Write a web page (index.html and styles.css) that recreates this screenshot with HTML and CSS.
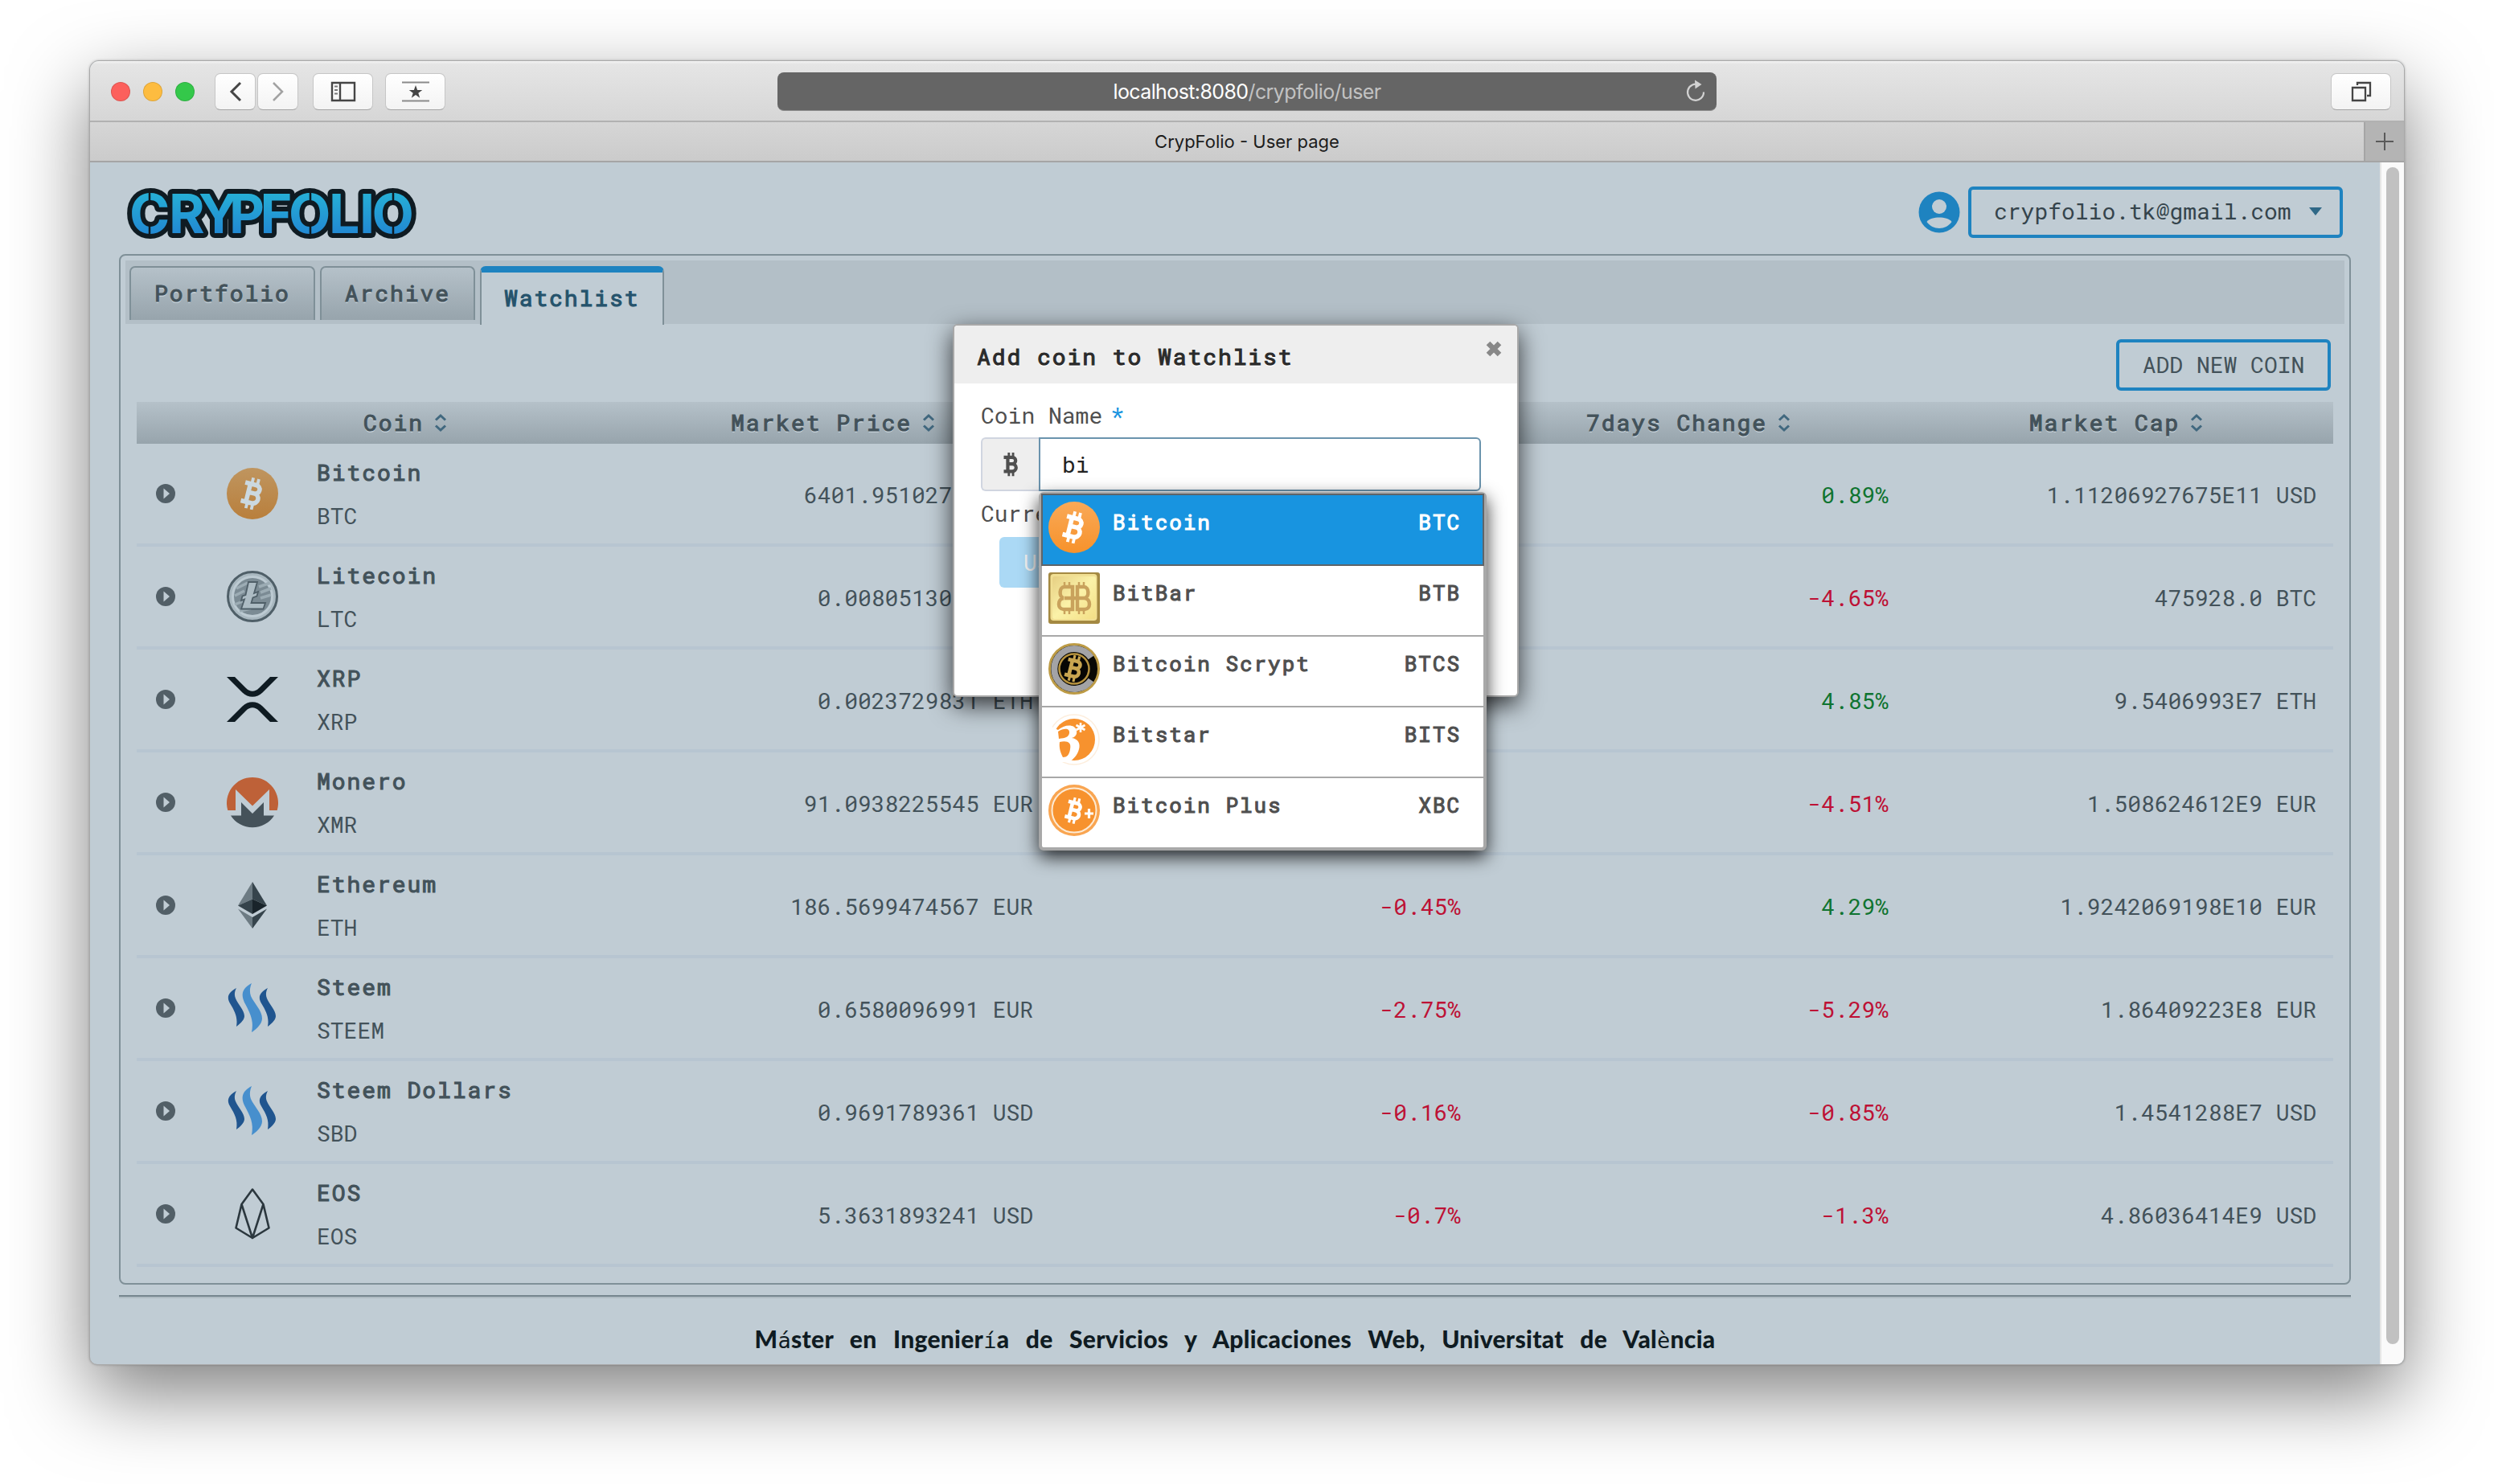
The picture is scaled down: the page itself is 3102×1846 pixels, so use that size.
FILE: index.html
```html
<!DOCTYPE html>
<html lang="en">
<head>
<meta charset="utf-8">
<title>CrypFolio - User page</title>
<link rel="stylesheet" href="styles.css">
</head>
<body>
<svg class="defs" width="0" height="0" aria-hidden="true">
  <defs>
    <linearGradient id="orange" x1="0" y1="0" x2="0" y2="1"><stop offset="0" stop-color="#f9a957"/><stop offset="1" stop-color="#f7922b"/></linearGradient>
    <linearGradient id="orange-dim" x1="0" y1="0" x2="0" y2="1"><stop offset="0" stop-color="#bf955f"/><stop offset="1" stop-color="#b97f3c"/></linearGradient>
    <linearGradient id="logo-fill" x1="0" y1="0" x2="0" y2="1"><stop offset="0.15" stop-color="#26b2d6"/><stop offset="0.9" stop-color="#2183d2"/></linearGradient>
    <linearGradient id="gold" x1="0" y1="0" x2="1" y2="1"><stop offset="0" stop-color="#e6cf83"/><stop offset="0.5" stop-color="#fbf2a8"/><stop offset="1" stop-color="#f3de85"/></linearGradient>
  </defs>
  <symbol id="b-mark" viewBox="0 0 64 64">
    <g fill="none" stroke="currentColor">
      <path stroke-width="5.6" d="M20 20.6H34a5.6 5.4 0 0 1 0 10.8H27M34 31.4a6.4 6.2 0 0 1 0 12.4H20M26.6 20.6V44"/>
      <path stroke-width="3.8" d="M28.4 12.6v8M35.4 12.6v8M28.4 44v7.6M35.4 44v7.6"/>
    </g>
  </symbol>
  <symbol id="sort" viewBox="0 0 16 24"><path fill="none" stroke="#41687f" stroke-width="3" d="M2 8.500 8 3l6 5.500M2 15.500 8 21l6-5.500"/></symbol>
  <symbol id="toggle" viewBox="0 0 24 24"><circle cx="12" cy="12" r="12" fill="#525f67"/><path fill="#c0ccd4" d="M9.500 5.500 17 12l-7.500 6.500z"/></symbol>
  <symbol id="steem" viewBox="0 0 64 64">
    <path fill="#20558f" d="M12 7C1 13 0 19 4 26c6 10 10 17 8 29 4-3 10-8 10-13 0-7-8-15-11-22-2-5-1-9 1-13z"/>
    <path fill="#20558f" d="M51 7C40 13 39 19 43 26c6 10 10 17 8 29 4-3 10-8 10-13 0-7-8-15-11-22-2-5-1-9 1-13z"/>
    <path fill="#478fcd" d="M31 1C18 8 18 16 22 25c7 13 12 22 9 37 5-3 13-10 13-17C44 35 34 26 30 17c-2-6-1-11 1-16z"/>
  </symbol>
</svg>

<div class="window">
  <header class="toolbar">
    <div class="lights"><i class="red"></i><i class="yellow"></i><i class="green"></i></div>
    <div class="pair">
      <span class="tb small"><svg width="16" height="26" viewBox="0 0 16 26"><path d="M14 2 3 13l11 11" fill="none" stroke="#454545" stroke-width="3"/></svg></span>
      <span class="tb small"><svg width="16" height="26" viewBox="0 0 16 26"><path d="M2 2l11 11L2 24" fill="none" stroke="#a2a2a2" stroke-width="2.500"/></svg></span>
    </div>
    <span class="tb side"><svg width="32" height="26" viewBox="0 0 32 26"><path d="M2 2h28v22H2zM12 2v22" fill="none" stroke="#454545" stroke-width="2.400"/><path d="M5 6.500h4M5 11h4M5 15.500h4" stroke="#777" stroke-width="2"/></svg></span>
    <span class="tb star"><svg width="36" height="26" viewBox="0 0 36 26"><path d="M1 1.500h34M1 24.500h34" stroke="#8a8a8a" stroke-width="2"/><path fill="#454545" d="m18 5 2.100 5.900h6.200l-5 3.800 1.900 6.100-5.200-3.700-5.200 3.700 1.900-6.100-5-3.800h6.200z"/></svg></span>
    <div class="address"><b>localhost:8080</b><span>/crypfolio/user</span>
      <svg class="reload" width="26" height="30" viewBox="0 0 26 30"><path d="M17 7.600A10 10 0 1 0 23 16.500" fill="none" stroke="#d2d2d2" stroke-width="2.200"/><path d="M12 1.500 20.500 7 12.500 12.500z" fill="#d2d2d2"/></svg>
    </div>
    <span class="tb tabs-btn"><svg width="26" height="26" viewBox="0 0 26 26"><path d="M8 5V2h16v16h-4M2 8h16v16H2z" fill="none" stroke="#454545" stroke-width="2.300"/></svg></span>
  </header>
  <div class="tabbar"><span class="tab-title">CrypFolio - User page</span><span class="plus"><svg width="24" height="24" viewBox="0 0 24 24"><path d="M12 1v22M1 12h22" stroke="#5a5a5a" stroke-width="2"/></svg></span></div>

  <div class="view">
    <div class="page">
      <div class="top">
        <svg class="logo" width="370" height="72" viewBox="0 0 370 72">
          <text class="logo-text logo-outline" x="7 56 93 131 169.500 205 255 293 308.500" y="58">CRYPFOLIO</text>
          <text class="logo-text" fill="url(#logo-fill)" x="7 56 93 131 169.500 205 255 293 308.500" y="58">CRYPFOLIO</text>
          <path d="M32 5v14M32 47v14M232 5v14M232 47v14M335 5v14M335 47v14" stroke="#0f1b22" stroke-width="2.500"/>
        </svg>
        <div class="account">
          <svg width="52" height="52" viewBox="0 0 52 52"><circle cx="26" cy="26" r="25.500" fill="#1e83c0"/><circle cx="26" cy="19" r="9" fill="#c0ccd4"/><path fill="#c0ccd4" d="M10.500 38C13 34 20 32.500 26 32.500S39 34 41.500 38C38 43 32 46 26 46s-12-3-15.500-8z"/></svg>
          <span class="email">crypfolio.tk@gmail.com<i class="caret"></i></span>
        </div>
      </div>

      <section class="panel">
        <nav class="tabs"><span class="tab">Portfolio</span><span class="tab">Archive</span><span class="tab active">Watchlist</span></nav>
        <div class="actions"><span class="add">ADD NEW COIN</span></div>
        <div class="table">
          <div class="row head">
            <span></span>
            <span>Coin<svg width="16" height="24"><use href="#sort"/></svg></span>
            <span>Market Price<svg width="16" height="24"><use href="#sort"/></svg></span>
            <span></span>
            <span>7days Change<svg width="16" height="24"><use href="#sort"/></svg></span>
            <span>Market Cap<svg width="16" height="24"><use href="#sort"/></svg></span>
          </div>
          <div class="row">
            <svg class="toggle" width="24" height="24"><use href="#toggle"/></svg>
            <div class="coin"><svg width="64" height="64" viewBox="0 0 64 64"><circle cx="32" cy="32" r="32" fill="url(#orange-dim)"/><g color="#cbd8df" transform="rotate(14 32 32)"><use href="#b-mark" width="64" height="64"/></g></svg><div><b>Bitcoin</b><span>BTC</span></div></div>
            <span>6401.95102700 USD</span><span></span><span class="up">0.89%</span><span>1.11206927675E11 USD</span>
          </div>
          <div class="row">
            <svg class="toggle" width="24" height="24"><use href="#toggle"/></svg>
            <div class="coin"><svg width="64" height="64" viewBox="0 0 64 64"><circle cx="32" cy="32" r="30.500" fill="#a9b8c0" stroke="#4f5f68" stroke-width="3"/><circle cx="32" cy="32" r="24.500" fill="#7b8b94" stroke="#bccad2" stroke-width="3"/><path d="M40 20l14-5M42 27l13-5M42 34l13-4M12 22l14-7M10 31l12-6M10 42l10-4M16 50l14-3" stroke="#9cacb4" stroke-width="3.500"/><path d="M27 14h11l-4 14 5-2-1.500 5.500-5 2L30.500 40H48l-2.500 7.500H18l4-12-4 1.500 1.500-5.500 4-1.500z" fill="#adbcc4" stroke="#4f5f68" stroke-width="1.800"/></svg><div><b>Litecoin</b><span>LTC</span></div></div>
            <span>0.0080513000 BTC</span><span></span><span class="down">-4.65%</span><span>475928.0 BTC</span>
          </div>
          <div class="row">
            <svg class="toggle" width="24" height="24"><use href="#toggle"/></svg>
            <div class="coin"><svg width="64" height="64" viewBox="0 0 64 64"><path fill="#0f1b22" d="M0 4h10L24 18c5 5 11 5 16 0L54 4h10L44.500 23.500c-7 7-18 7-25 0zM0 60h10L24 46c5-5 11-5 16 0l14 14h10L44.500 40.500c-7-7-18-7-25 0z"/></svg><div><b>XRP</b><span>XRP</span></div></div>
            <span>0.0023729831 ETH</span><span></span><span class="up">4.85%</span><span>9.5406993E7 ETH</span>
          </div>
          <div class="row">
            <svg class="toggle" width="24" height="24"><use href="#toggle"/></svg>
            <div class="coin"><svg width="64" height="64" viewBox="0 0 64 64"><path fill="#be6138" d="M1.300 42A32 32 0 1 1 62.700 42H53V16L32 36.500 11 16v26z"/><path fill="#45525a" d="M5 48.500h13V32l14 14 14-14v16.500h13A32 32 0 0 1 5 48.500z"/></svg><div><b>Monero</b><span>XMR</span></div></div>
            <span>91.0938225545 EUR</span><span></span><span class="down">-4.51%</span><span>1.508624612E9 EUR</span>
          </div>
          <div class="row">
            <svg class="toggle" width="24" height="24"><use href="#toggle"/></svg>
            <div class="coin"><svg width="64" height="64" viewBox="0 0 64 64"><path fill="#6d7b83" d="M32 3 14 32.500l18-8z"/><path fill="#36444c" d="M32 3v21.500l18 8z"/><path fill="#35434b" d="M14 32.500l18-8V43z"/><path fill="#19242b" d="M50 32.500l-18-8V43z"/><path fill="#6d7b83" d="M14 36.500 32 47v14z"/><path fill="#36444c" d="M50 36.500 32 47v14z"/></svg><div><b>Ethereum</b><span>ETH</span></div></div>
            <span>186.5699474567 EUR</span><span class="down">-0.45%</span><span class="up">4.29%</span><span>1.9242069198E10 EUR</span>
          </div>
          <div class="row">
            <svg class="toggle" width="24" height="24"><use href="#toggle"/></svg>
            <div class="coin"><svg width="64" height="64"><use href="#steem"/></svg><div><b>Steem</b><span>STEEM</span></div></div>
            <span>0.6580096991 EUR</span><span class="down">-2.75%</span><span class="down">-5.29%</span><span>1.86409223E8 EUR</span>
          </div>
          <div class="row">
            <svg class="toggle" width="24" height="24"><use href="#toggle"/></svg>
            <div class="coin"><svg width="64" height="64"><use href="#steem"/></svg><div><b>Steem Dollars</b><span>SBD</span></div></div>
            <span>0.9691789361 USD</span><span class="down">-0.16%</span><span class="down">-0.85%</span><span>1.4541288E7 USD</span>
          </div>
          <div class="row">
            <svg class="toggle" width="24" height="24"><use href="#toggle"/></svg>
            <div class="coin"><svg width="64" height="64" viewBox="0 0 64 64"><path fill="none" stroke="#2b373e" stroke-width="2.600" stroke-linejoin="round" d="M32 1.500 18.500 20 11.500 49.500 32 62l20.500-12.500L45.500 20zM18.500 20 32 62l13.500-42"/></svg><div><b>EOS</b><span>EOS</span></div></div>
            <span>5.3631893241 USD</span><span class="down">-0.7%</span><span class="down">-1.3%</span><span>4.86036414E9 USD</span>
          </div>
        </div>
      </section>
      <footer>M<i>á</i>ster en Ingenier<i>í</i>a de Servicios y Aplicaciones Web, Universitat de Val<i>è</i>ncia</footer>
    </div>
    <div class="scrollbar"><i></i></div>
  </div>

  <div class="dialog">
    <div class="dialog-head"><b>Add coin to Watchlist</b><svg width="20" height="20" viewBox="0 0 20 20"><path d="M3 3l14 14M17 3 3 17" stroke="#888" stroke-width="6.500"/></svg></div>
    <div class="dialog-body">
      <label>Coin Name<em>*</em></label>
      <div class="field"><span class="addon"><svg width="33" height="33" viewBox="10 10 44 44"><g color="#4f4f4f" stroke-width="1"><use href="#b-mark" width="64" height="64"/></g></svg></span><span class="input">bi</span></div>
      <label>Currency</label>
      <div class="choice">USD</div>
    </div>
    <div class="suggest">
      <div class="item selected"><svg width="64" height="64" viewBox="0 0 64 64"><circle cx="32" cy="32" r="32" fill="url(#orange)"/><g color="#fff" transform="rotate(14 32 32)"><use href="#b-mark" width="64" height="64"/></g></svg><b>Bitcoin</b><b>BTC</b></div>
      <div class="item"><svg width="64" height="64" viewBox="0 0 64 64"><rect width="64" height="64" rx="3" fill="#a48942"/><rect x="2.500" y="2" width="58" height="58" rx="4" fill="#f1df93"/><rect x="5" y="5" width="54" height="53" rx="3" fill="url(#gold)"/><g fill="none" stroke="#c9a25c" stroke-width="4.500"><path d="M30 18v28H19c-8 0-8-13 0-14-6-1-6-14 1-14zM36 18v28h9c8 0 8-13 0-14 6-1 6-14-1-14zM20 32h26"/><path stroke-width="2.500" d="M20 12v6M26 12v6M38 12v6M44 12v6M20 46v6M26 46v6M38 46v6M44 46v6"/></g></svg><b>BitBar</b><b>BTB</b></div>
      <div class="item"><svg width="64" height="64" viewBox="0 0 64 64"><circle cx="32" cy="32" r="30.500" fill="#0a0905" stroke="#bd9b45" stroke-width="3"/><path d="M53 18A25 25 0 1 0 53 46" fill="none" stroke="#a3a3a6" stroke-width="8"/><circle cx="32" cy="32" r="18.500" fill="#070604" stroke="#b7933f" stroke-width="2.500"/><g color="#c9a550" transform="translate(5.500 5) scale(.83) rotate(14 32 32)"><use href="#b-mark" width="64" height="64"/></g></svg><b>Bitcoin Scrypt</b><b>BTCS</b></div>
      <div class="item"><svg width="64" height="64" viewBox="0 0 64 64"><circle cx="32" cy="32" r="31" fill="#fff" stroke="#fdeedd" stroke-width="1.500"/><circle cx="32" cy="32" r="26" fill="#f7922e"/><path d="M0 14l12 6c8-7 21-8 23 1 1 5-2 8-6 9 8 1 11 7 9 14-2 8-7 12-12 16L0 60z" fill="#fff"/><path d="M12 22c8-5 15-4 14 2-1 5-5 6-13 7zM14 35c9-2 15 0 13 9-1 7-4 10-9 10-3-6-5-12-4-19z" fill="#f7922e"/><path d="M40 11v12M34.500 14l11 6M45.500 14l-11 6" stroke="#fff" stroke-width="2.600"/></svg><b>Bitstar</b><b>BITS</b></div>
      <div class="item"><svg width="64" height="64" viewBox="0 0 64 64"><circle cx="32" cy="32" r="32" fill="#f9a551"/><circle cx="32" cy="32" r="27.500" fill="#f7922e" stroke="#fdead3" stroke-width="2"/><g color="#fff" transform="translate(6 6) scale(.82) rotate(14 32 32)"><use href="#b-mark" width="64" height="64"/></g><path d="M50.500 30v12M45 36h11" stroke="#fff" stroke-width="3.200"/></svg><b>Bitcoin Plus</b><b>XBC</b></div>
    </div>
  </div>
</div>
</body>
</html>
```
FILE: styles.css
```css
* { box-sizing: border-box; }
body {
  margin: 0;
  padding: 75px 0 0 111px;
  height: 1846px;
  overflow: hidden;
  background: #fff;
  font: 28px/1 "Roboto Mono", "DejaVu Sans Mono", monospace;
  color: #43525a;
}
.defs { position: absolute; }
svg { display: block; flex: none; }
i { font-style: normal; }

.window {
  position: relative;
  display: flex;
  flex-direction: column;
  width: 2880px;
  height: 1623px;
  border: 1px solid #a9a9a9;
  border-radius: 12px 12px 10px 10px;
  background: #c0ccd4;
  box-shadow: 0 36px 96px rgba(0, 0, 0, .5), 0 0 3px rgba(0, 0, 0, .25);
}
.toolbar {
  display: flex;
  align-items: center;
  height: 76px;
  padding: 2px 16px 0 26px;
  background: linear-gradient(#f4f4f4, #e5e5e5 4px, #d6d6d6);
  border-bottom: 2px solid #b1b1b1;
  border-radius: 11px 11px 0 0;
}
.lights { display: flex; gap: 16px; width: 129px; }
.lights i { width: 24px; height: 24px; border-radius: 50%; border: 1px solid rgba(0, 0, 0, .12); }
.red { background: #fc605c; }
.yellow { background: #fdbc40; }
.green { background: #34c84a; }
.pair { display: flex; gap: 2px; }
.tb {
  display: flex;
  align-items: center;
  justify-content: center;
  width: 75px;
  height: 46px;
  background: linear-gradient(#fff, #f3f3f3);
  border: 1px solid #c6c6c6;
  border-bottom-color: #a5a5a5;
  border-radius: 7px;
}
.tb.small { width: 51px; }
.tb.side { margin-left: 18px; }
.tb.star { margin-left: 15px; }
.address {
  position: relative;
  display: flex;
  align-items: center;
  justify-content: center;
  width: 1168px;
  height: 48px;
  margin: 0 auto 0 413px;
  padding-top: 1px;
  background: #656565;
  border-bottom: 1px solid #8d8d8d;
  border-radius: 8px;
  font: 25px/1 Inter, sans-serif;
  letter-spacing: -.6px;
  color: #fff;
}
.address b { font-weight: 400; }
.address span { color: #c2c2c2; }
.reload { position: absolute; right: 13px; top: 8px; }
.tabbar {
  display: flex;
  height: 50px;
  background: linear-gradient(#d6d6d6, #cbcbcb);
  border-bottom: 2px solid #a5a5a5;
  font: 22px/48px Inter, sans-serif;
  color: #1c1c1c;
}
.tab-title { flex: 1; text-align: center; padding-left: 50px; }
.plus {
  display: flex;
  align-items: center;
  justify-content: center;
  width: 50px;
  background: #b4b4b4;
  border-left: 2px solid #a5a5a5;
}

.view { display: flex; flex: 1; min-height: 0; border-radius: 0 0 9px 9px; overflow: hidden; }
.page { width: 2848px; padding: 0 36px; }
.scrollbar { flex: 1; background: #fafafa; border-left: 2px solid #e6e6e6; padding: 6px 0 0 6px; }
.scrollbar i { display: block; width: 16px; height: 1464px; border-radius: 8px; background: #c1c1c1; }
.top { display: flex; justify-content: space-between; height: 114px; padding: 30px 10px 0 6px; }
.logo { overflow: visible; }
.logo-text { font: 700 68px Inter, sans-serif; }
.logo-outline { fill: #0f1b22; stroke: #0f1b22; stroke-width: 12px; stroke-linejoin: round; }
.account { display: flex; height: 64px; align-items: center; gap: 10px; }
.email {
  display: flex;
  align-items: center;
  justify-content: space-between;
  width: 466px;
  height: 64px;
  padding: 0 22px 2px 28px;
  border: 4px solid #1e83c0;
  border-radius: 6px;
  color: #35444c;
}
.caret { border: 8px solid transparent; border-top: 10px solid #2f6887; border-bottom: 0; }

.panel {
  height: 1282px;
  padding: 6px;
  border: 2px solid #7f9098;
  border-radius: 8px;
}
.tabs { display: flex; gap: 6px; height: 79px; padding: 7px 5px 0; background: #b3bfc7; }
.tab, .row.head, .row b, .dialog b { font-weight: 400; -webkit-text-stroke: 1.1px currentColor; letter-spacing: 1.94px; }
.tab {
  height: 67px;
  padding: 0 29px;
  line-height: 64px;
  border: 2px solid #7f9098;
  border-bottom: 0;
  border-radius: 7px 7px 0 0;
  background: linear-gradient(#b5c1c9, #97a4ac);
  text-shadow: 0 2px 0 #c2ced6;
}
.tab.active {
  height: 73px;
  padding: 0 28px;
  border-top: 8px solid #1e83c0;
  background: #c0ccd4;
  color: #25536c;
  text-shadow: none;
}
.actions { display: flex; justify-content: flex-end; height: 97px; padding: 19px 17px 0; }
.add {
  width: 267px;
  height: 64px;
  line-height: 56px;
  text-align: center;
  border: 4px solid #1e83c0;
  border-radius: 6px;
}
.table { margin: 0 14px; }
.row {
  display: grid;
  grid-template-columns: 72px repeat(5, 532px);
  align-items: center;
  height: 128px;
  border-bottom: 4px solid #b7c5d1;
  text-align: right;
}
.row > span { padding: 3px 21px 0 0; letter-spacing: -.03px; }
.row.head {
  height: 52px;
  border: 0;
  background: linear-gradient(#b5c1c9, #97a4ac);
  text-shadow: 0 2px 0 #c2ced6;
}
.row.head span { display: flex; align-items: center; justify-content: center; gap: 13px; letter-spacing: 1.94px; padding: 0 8px 0 0; }
.toggle { justify-self: center; }
.coin { display: flex; gap: 48px; padding-left: 40px; align-items: center; text-align: left; }
.coin > div { padding-top: 2px; }
.coin b, .coin div span { display: block; line-height: 54px; }
.up { color: #0f7430; }
.down { color: #bd1135; }
footer {
  margin-top: 13px;
  border-top: 2px solid #76868e;
  box-shadow: inset 0 2px 0 #b0bcc3;
  padding-top: 35px;
  text-align: center;
  font: 900 30px/34px Lato, sans-serif;
  letter-spacing: .3px;
  word-spacing: 13px;
  color: #0f1b22;
}
footer i { font: 400 27px/34px "DejaVu Sans Mono", monospace; }

.dialog {
  position: absolute;
  left: 1073px;
  top: 327px;
  width: 704px;
  height: 464px;
  background: #fff;
  border: 2px solid #a8a8a8;
  border-radius: 6px;
  box-shadow: 0 10px 30px rgba(0, 0, 0, .75);
  color: #4f4f4f;
}
.dialog-head {
  display: flex;
  justify-content: space-between;
  height: 72px;
  padding: 19px 19px 0 28px;
  background: #eee;
  color: #2b2b2b;
  line-height: 40px;
  border-radius: 4px 4px 0 0;
}
.dialog-head b { text-shadow: 0 2px 0 #fff; }
.dialog-body { padding: 22px 33px; }
.dialog label { display: block; line-height: 36px; }
.dialog em { color: #1894e0; font-style: normal; margin-left: 10px; }
.field { display: flex; margin: 9px 0 10px; height: 67px; width: 622px; }
.addon {
  display: flex;
  align-items: center;
  justify-content: center;
  width: 72px;
  background: #eee;
  border: 2px solid #d0d5e0;
  border-right: 0;
  border-radius: 6px 0 0 6px;
}
.input {
  flex: 1;
  padding: 1px 0 0 27px;
  line-height: 62px;
  border: 2px solid #6a93ad;
  border-radius: 0 6px 6px 0;
  color: #222;
}
.choice { width: 120px; height: 63px; margin: 11px 0 0 23px; padding-left: 30px; line-height: 63px; background: #abd9f5; border-radius: 6px; color: #f4f4f4; }
.suggest {
  position: absolute;
  left: 105px;
  top: 207px;
  width: 557px;
  height: 446px;
  border: 4px solid #a8a8a8;
  border-radius: 6px;
  background: #fff;
  box-shadow: 0 8px 22px rgba(0, 0, 0, .8);
  font-size: 26px;
}
.item { display: flex; height: 88px; padding: 8px 28px 0 8px; border-bottom: 2px solid #a8a8a8; }
.item:last-child { border: 0; }
.item b { line-height: 50px; letter-spacing: 1.95px; }
.item b:last-child { margin-left: auto; }
.item svg { margin-right: 16px; }
.selected { height: 90px; margin: -2px -1px 0; padding: 8px 27px 0 7px; background: #1894e0; border: 2px solid #5f6468; color: #fff; }
```
